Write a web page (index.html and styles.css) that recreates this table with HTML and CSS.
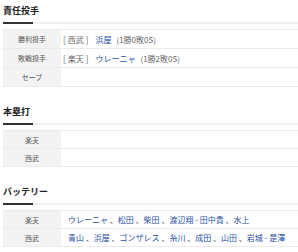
FILE: index.html
```html
<!DOCTYPE html>
<html lang="ja">
<head>
<meta charset="utf-8">
<link rel="stylesheet" href="styles.css">
</head>
<body>
<div class="page">
  <section class="sec">
    <h2 class="ttl"><span>責任投手</span></h2>
    <table class="tbl">
      <tr><th>勝利投手</th><td><span class="br">[</span><span class="tm">西武</span><span class="br">]</span><a class="pl">浜屋</a><span class="rec">(1勝0敗0S)</span></td></tr>
      <tr><th>敗戦投手</th><td><span class="br">[</span><span class="tm">楽天</span><span class="br">]</span><a class="pl">ウレーニャ</a><span class="rec">(1勝2敗0S)</span></td></tr>
      <tr><th>セーブ</th><td></td></tr>
    </table>
  </section>
  <section class="sec">
    <h2 class="ttl"><span>本塁打</span></h2>
    <table class="tbl sm">
      <tr><th>楽天</th><td></td></tr>
      <tr><th>西武</th><td></td></tr>
    </table>
  </section>
  <section class="sec">
    <h2 class="ttl"><span>バッテリー</span></h2>
    <table class="tbl sm bat">
      <tr><th>楽天</th><td><a>ウレーニャ</a> <span class="sep">、</span><a>松田</a> <span class="sep">、</span><a>柴田</a> <span class="sep">、</span><a>渡辺翔</a> <span class="sep">-</span> <a>田中貴</a> <span class="sep">、</span><a>水上</a></td></tr>
      <tr><th>西武</th><td><a>青山</a> <span class="sep">、</span><a>浜屋</a> <span class="sep">、</span><a>ゴンザレス</a> <span class="sep">、</span><a>糸川</a> <span class="sep">、</span><a>成田</a> <span class="sep">、</span><a>山田</a> <span class="sep">、</span><a>岩城</a> <span class="sep">-</span> <a>是澤</a></td></tr>
    </table>
  </section>
</div>
</body>
</html>
```
FILE: styles.css
```css
html, body {
  margin: 0;
  padding: 0;
  background: #fff;
}
body {
  font-family: "Noto Sans CJK JP", "Noto Sans", sans-serif;
  color: #333;
  overflow: hidden;
}
.page {
  padding: 4px 0 0 3px;
}
.sec {
  margin-bottom: 18px;
}
.ttl {
  margin: 0;
  font-size: 9px;
  line-height: 13px;
  font-weight: bold;
  color: #222;
  padding-bottom: 5px;
  border-bottom: 2px solid #f0f0f0;
  position: relative;
}
.ttl span::after {
  content: "";
  position: absolute;
  left: 0;
  bottom: -2px;
  width: 30px;
  height: 2px;
  background: #333;
}
.tbl {
  margin-top: 5px;
  width: 100%;
  border-collapse: collapse;
  table-layout: fixed;
}
.tbl tr {
  border-top: 1px solid #ebebeb;
  border-bottom: 1px solid #ebebeb;
}
.tbl th {
  width: 58px;
  height: 18px;
  padding: 0;
  background: #f3f3f3;
  font-weight: normal;
  font-size: 7px;
  color: #555;
  text-align: center;
  vertical-align: middle;
}
.tbl td {
  height: 18px;
  padding: 0 0 0 2px;
  font-size: 8px;
  color: #555;
  white-space: nowrap;
  vertical-align: middle;
}
.sm th, .sm td {
  height: 17px;
}
.bat td {
  padding-left: 7px;
}
.tbl a {
  color: #1f4fa3;
  text-decoration: none;
}
.br, .tm, .rec {
  color: #666;
}
.tm {
  margin: 0 2px 0 2px;
}
.pl {
  margin: 0 5px 0 7px;
}
.sep {
  color: #555;
}
```
